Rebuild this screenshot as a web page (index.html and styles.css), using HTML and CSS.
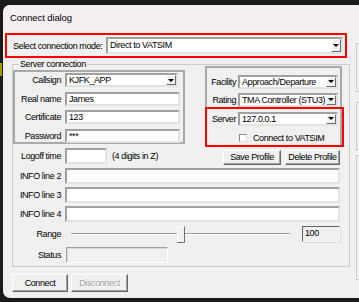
FILE: index.html
```html
<!DOCTYPE html>
<html lang="en">
<head>
    <meta charset="UTF-8">
    <meta name="viewport" content="width=device-width, initial-scale=1.0">
    <title>Connect dialog</title>
    <link rel="stylesheet" href="styles.css">
</head>
<body>
    <div class="desk-edge"><span></span></div>
    <div class="window">
        <div class="titlebar">Connect dialog</div>
        <div class="client">
            <div class="main">
                <div class="mode-row marked">
                    <span class="mode-label">Select connection mode:</span>
                    <div class="combo mode-combo"><span class="combo-text">Direct to VATSIM</span><span class="combo-btn"></span></div>
                </div>

                <fieldset class="group">
                    <legend>Server connection</legend>
                    <div class="top">
                        <div class="panel left-panel">
                            <div class="row">
                                <label>Callsign</label>
                                <div class="combo callsign"><span class="combo-text">KJFK_APP</span><span class="combo-btn"></span></div>
                            </div>
                            <div class="row">
                                <label>Real name</label>
                                <div class="field">James</div>
                            </div>
                            <div class="row">
                                <label>Certificate</label>
                                <div class="field">123</div>
                            </div>
                            <div class="row">
                                <label>Password</label>
                                <div class="field">***</div>
                            </div>
                        </div>

                        <div class="right-col">
                            <div class="panel right-panel">
                                <div class="row">
                                    <label>Facility</label>
                                    <div class="combo"><span class="combo-text">Approach/Departure</span><span class="combo-btn"></span></div>
                                </div>
                                <div class="row">
                                    <label>Rating</label>
                                    <div class="combo"><span class="combo-text">TMA Controller (STU3)</span><span class="combo-btn"></span></div>
                                </div>
                                <div class="server-box marked">
                                    <div class="row">
                                        <label>Server</label>
                                        <div class="combo"><span class="combo-text">127.0.0.1</span><span class="combo-btn"></span></div>
                                    </div>
                                    <div class="check-row"><span class="check"></span>Connect to VATSIM</div>
                                </div>
                            </div>
                        </div>
                    </div>

                    <div class="line logoff-row">
                        <label>Logoff time</label>
                        <div class="field logoff"></div>
                        <span class="hint">(4 digits in Z)</span>
                        <span class="spacer"></span>
                        <button class="btn save">Save Profile</button>
                        <button class="btn delete">Delete Profile</button>
                    </div>
                    <div class="line">
                        <label>INFO line 2</label>
                        <div class="field wide"></div>
                    </div>
                    <div class="line">
                        <label>INFO line 3</label>
                        <div class="field wide"></div>
                    </div>
                    <div class="line">
                        <label>INFO line 4</label>
                        <div class="field wide"></div>
                    </div>
                    <div class="line range-row">
                        <label>Range</label>
                        <svg class="slider" width="231" height="18" viewBox="0 0 231 18">
                            <line x1="6" y1="8.5" x2="225" y2="8.5" stroke="#9a9a9a" stroke-width="1"/>
                            <line x1="6" y1="9.5" x2="225" y2="9.5" stroke="#ffffff" stroke-width="1"/>
                            <rect x="112" y="1" width="8" height="17" fill="#f0f0f0"/>
                            <path d="M112.5 17.5 V1.5 H119.5" fill="none" stroke="#ffffff"/>
                            <path d="M112.5 17.5 H119.5 V1.5" fill="none" stroke="#6e6e6e"/>
                        </svg>
                        <div class="value-box">100</div>
                    </div>
                    <div class="line status-row">
                        <label>Status</label>
                        <div class="status-box"></div>
                    </div>
                </fieldset>

                <div class="actions">
                    <button class="btn connect">Connect</button>
                    <button class="btn disconnect" disabled>Disconnect</button>
                </div>
            </div>
            <div class="side">
                <div class="side-box first"></div>
                <div class="side-box second"></div>
                <div class="side-box third"></div>
            </div>
        </div>
    </div>
</body>
</html>
```

FILE: styles.css
```css
* {
    box-sizing: border-box;
}
body {
    margin: 0;
    width: 359px;
    height: 302px;
    overflow: hidden;
    display: flex;
    background-color: #1a1a1a;
    font-family: "Liberation Sans", Arial, sans-serif;
    font-size: 9px;
    letter-spacing: -0.4px;
    color: #000;
}
.desk-edge {
    width: 3px;
    flex: none;
    padding-top: 63px;
}
.desk-edge span {
    display: block;
    width: 2px;
    height: 13px;
    background-color: #a89a10;
}
.window {
    margin-top: 5px;
    width: 372px;
    height: 293px;
    flex: none;
    overflow: hidden;
    background-color: #f0f0f0;
    border-radius: 7px 0 0 7px;
}
.titlebar {
    height: 25px;
    line-height: 25px;
    padding-left: 7px;
    font-size: 9.5px;
    letter-spacing: -0.1px;
    background-color: #f6eff2;
}
.client {
    display: flex;
}
.main {
    width: 350px;
    flex: none;
}
.marked {
    border: 2px solid #ff0000;
}
.mode-row {
    margin: 3px 0 0 2px;
    width: 342px;
    height: 25px;
    display: flex;
    align-items: center;
    padding: 0 2px 0 6px;
}
.mode-label {
    width: 93px;
    flex: none;
    white-space: nowrap;
}
.combo {
    display: flex;
    height: 14px;
    background-color: #fff;
    border: 2px solid;
    border-color: #a0a0a0 #e3e3e3 #e3e3e3 #a0a0a0;
}
.mode-combo {
    flex: 1;
    height: 17px;
}
.combo-text {
    flex: 1;
    padding-left: 2px;
    line-height: 10px;
    white-space: nowrap;
    overflow: hidden;
}
.mode-combo .combo-text {
    line-height: 13px;
}
.combo-btn {
    width: 10px;
    flex: none;
    display: flex;
    align-items: center;
    justify-content: center;
    background-color: #f0f0f0;
    border: 1px solid;
    border-color: #fff #6e6e6e #6e6e6e #fff;
}
.combo-btn::after {
    content: "";
    border-left: 3px solid transparent;
    border-right: 3px solid transparent;
    border-top: 3px solid #000;
}
.field {
    height: 14px;
    padding-left: 2px;
    line-height: 10px;
    background-color: #fff;
    border: 2px solid;
    border-color: #a0a0a0 #e3e3e3 #e3e3e3 #a0a0a0;
}
.group {
    margin: 1px 0 0 9px;
    width: 338px;
    min-width: 0;
    padding: 0 0 3px 0;
    border: 1px solid #cbcbcb;
}
.group legend {
    margin-left: 6px;
    padding: 0 1px;
    line-height: 11px;
}
.top {
    display: flex;
    align-items: flex-start;
}
.panel {
    border: 2px solid #a9a9a9;
}
.row {
    display: flex;
    align-items: center;
    gap: 4px;
}
.row label {
    width: 46px;
    flex: none;
    text-align: right;
    white-space: nowrap;
}
.left-panel {
    width: 172px;
    height: 74px;
    padding: 1px 3px 0 0;
    display: flex;
    flex-direction: column;
    gap: 4.5px;
}
.left-panel .field {
    width: 115px;
}
.left-panel .callsign {
    width: 113px;
}
.right-col {
    width: 137px;
    margin: -4.5px 0 0 20px;
}
.right-panel {
    border-bottom: none;
    padding-top: 7px;
}
.right-panel .row {
    gap: 2px;
}
.right-panel .row + .row {
    margin-top: 4px;
}
.right-panel .row label {
    width: 29px;
}
.right-panel .combo {
    width: 100px;
}
.server-box {
    height: 40px;
    margin: 0 -4px 0 -2px;
    padding-top: 3px;
}
.check-row {
    display: flex;
    align-items: center;
    gap: 6px;
    margin-top: 7px;
    padding-left: 32px;
}
.check {
    width: 8px;
    height: 8px;
    background-color: #fff;
    border: 1px solid;
    border-color: #8a8a8a #dcdcdc #dcdcdc #8a8a8a;
}
.line {
    display: flex;
    align-items: center;
    padding: 0 9px 0 2px;
    margin-top: 3px;
}
.line label {
    width: 46px;
    flex: none;
    text-align: right;
    margin-right: 4px;
    white-space: nowrap;
}
.field.wide {
    flex: 1;
    height: 16px;
}
.logoff-row {
    align-items: flex-start;
    margin-top: 1px;
}
.logoff-row label {
    line-height: 16px;
}
.field.logoff {
    width: 42px;
    height: 16px;
}
.hint {
    margin-left: 5px;
    line-height: 16px;
}
.spacer {
    flex: 1;
}
.btn {
    height: 15px;
    padding: 0;
    font-family: inherit;
    font-size: 9px;
    letter-spacing: -0.4px;
    white-space: nowrap;
    color: #000;
    background-color: #f0f0f0;
    border: 1px solid;
    border-color: #fff #696969 #696969 #fff;
    box-shadow: inset -1px -1px 0 #a0a0a0;
}
.save {
    width: 58px;
    margin-top: 2px;
}
.delete {
    width: 55px;
    margin: 2px 0 0 4px;
}
.range-row {
    height: 18px;
}
.slider {
    display: block;
    flex: none;
}
.value-box {
    width: 40px;
    height: 16px;
    margin-left: 6px;
    padding-left: 2px;
    line-height: 12px;
    border: 1px solid;
    border-color: #646464 #f8f8f8 #f8f8f8 #646464;
    box-shadow: 1px 1px 0 #dcdcdc;
}
.status-row {
    margin-top: 4px;
}
.status-box {
    width: 102px;
    height: 16px;
    margin-left: 1px;
    border: 1px solid;
    border-color: #a0a0a0 #fff #fff #a0a0a0;
    box-shadow: inset 1px 1px 0 #d8d8d8;
}
.actions {
    display: flex;
    gap: 3px;
    margin: 7px 0 0 9px;
}
.connect {
    width: 56px;
    height: 18px;
}
.disconnect {
    width: 57px;
    height: 18px;
    color: #a0a0a0;
    text-shadow: 1px 1px 0 #fff;
}
.side {
    margin-left: 3px;
    padding-top: 13px;
    display: flex;
    flex-direction: column;
}
.side-box {
    width: 20px;
    border: 1px solid #cbcbcb;
}
.first {
    height: 49px;
}
.second {
    height: 48px;
    margin-top: 10px;
}
.third {
    height: 125px;
    margin-top: 5px;
}
```
